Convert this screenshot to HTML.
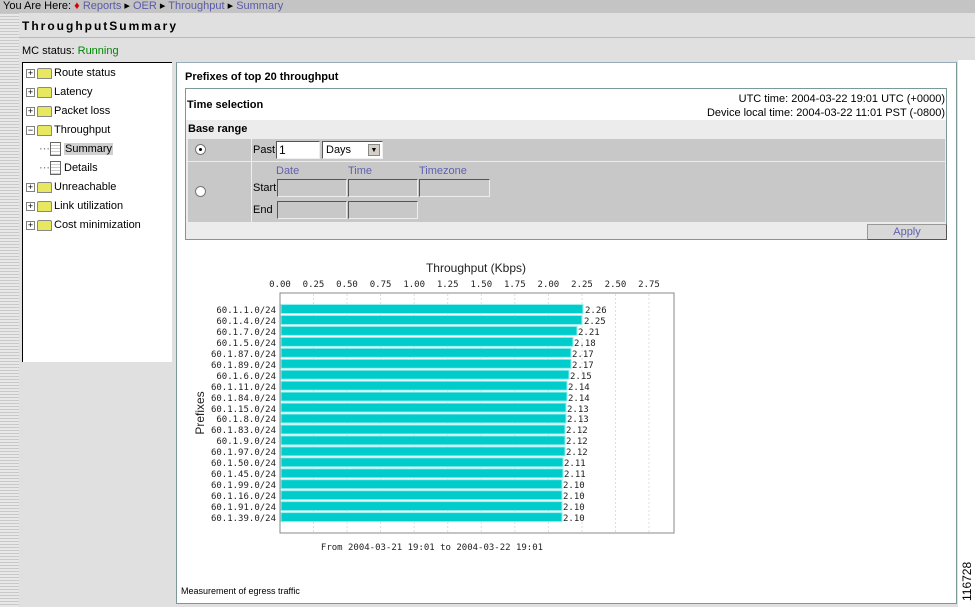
<!DOCTYPE html>
<html><head><meta charset="utf-8"><style>
*{margin:0;padding:0;box-sizing:border-box}
body{width:975px;height:607px;overflow:hidden;position:relative;background:#e0e0e0;font-family:"Liberation Sans",sans-serif;font-size:11px;color:#000}
.a{position:absolute;white-space:nowrap}
.stripe{left:0;top:13px;width:19px;height:594px;background:repeating-linear-gradient(#c8c8c8 0 1px,#e8e8e8 1px 3px)}
.crumb{left:0;top:0;width:975px;height:13px;background:#c4c4c4;font-size:11px;line-height:13px;padding-left:3px}
.crumb a{color:#5a5aa8;text-decoration:none}
.title{left:22px;top:19px;font-weight:bold;font-size:12px;letter-spacing:2px}
.tree{left:22px;top:62px;width:150px;height:300px;background:#fff;border-left:1px solid #000;border-top:1px solid #000}
.ti{position:absolute;left:3px;height:16px;line-height:16px;font-size:11px}
.pl{display:inline-block;width:9px;height:9px;border:1px solid #808080;font-size:9px;line-height:7px;text-align:center;vertical-align:middle;margin-right:2px;background:#fff}
.fd{display:inline-block;width:15px;height:11px;background:#e8e860;border:1px solid #888;vertical-align:middle;margin-right:2px;border-radius:2px 2px 0 0}
.doc{display:inline-block;width:11px;height:14px;border:1px solid #666;background:repeating-linear-gradient(#fff 0 2px,#ccc 2px 3px);vertical-align:middle;margin-right:3px}
.main{left:176px;top:62px;width:781px;height:542px;background:#fff;border:1px solid #7a9a98;border-top-color:#9ab}
.box{left:185px;top:88px;width:762px;height:152px;border:1px solid #7a9a98}
.in{background:#c8c8c8;border-top:1px solid #555;border-left:1px solid #555;border-bottom:1px solid #eee;border-right:1px solid #eee;position:absolute;height:18px}
.lbl{color:#6060b0}
</style></head><body>
<div class="a crumb">You Are Here: <span style="color:#d00">♦</span> <a>Reports</a> ▸ <a>OER</a> ▸ <a>Throughput</a> ▸ <a>Summary</a></div>
<div class="a stripe"></div>
<div class="a" style="left:19px;top:37px;width:956px;height:1px;background:#b8b8b8"></div>
<div class="a title">ThroughputSummary</div>
<div class="a" style="left:22px;top:45px">MC status: <span style="color:#080">Running</span></div>
<div class="a" style="left:958px;top:60px;width:17px;height:547px;background:#fff"></div>
<div class="a tree">
<div class="ti" style="top:2px"><span class="pl">+</span><span class="fd"></span>Route status</div>
<div class="ti" style="top:21px"><span class="pl">+</span><span class="fd"></span>Latency</div>
<div class="ti" style="top:40px"><span class="pl">+</span><span class="fd"></span>Packet loss</div>
<div class="ti" style="top:59px"><span class="pl">−</span><span class="fd"></span>Throughput</div>
<div class="ti" style="top:78px;left:16px"><span style="color:#888">⋯</span><span class="doc"></span><span style="background:#d0d0d0;padding:0 1px">Summary</span></div>
<div class="ti" style="top:97px;left:16px"><span style="color:#888">⋯</span><span class="doc"></span>Details</div>
<div class="ti" style="top:116px"><span class="pl">+</span><span class="fd"></span>Unreachable</div>
<div class="ti" style="top:135px"><span class="pl">+</span><span class="fd"></span>Link utilization</div>
<div class="ti" style="top:154px"><span class="pl">+</span><span class="fd"></span>Cost minimization</div>
</div>
<div class="a main"></div>
<div class="a" style="left:185px;top:71px;font-weight:bold">Prefixes of top 20 throughput</div>
<div class="a box"></div>
<div class="a" style="left:187px;top:99px;font-weight:bold">Time selection</div>
<div class="a" style="left:600px;top:92px;width:345px;text-align:right;line-height:14px;white-space:normal">UTC time: 2004-03-22 19:01 UTC (+0000)<br>Device local time: 2004-03-22 11:01 PST (-0800)</div>
<div class="a" style="left:186px;top:120px;width:760px;height:119px;background:#ececec"></div>
<div class="a" style="left:188px;top:123px;font-weight:bold">Base range</div>
<div class="a" style="left:188px;top:139px;width:757px;height:22px;background:#c8c8c8"></div>
<div class="a" style="left:188px;top:162px;width:757px;height:60px;background:#c8c8c8"></div>
<div class="a" style="left:251px;top:139px;width:1px;height:83px;background:#eee"></div>
<div class="a" style="left:195px;top:144px;width:11px;height:11px;border-radius:50%;background:#fff;border:1px solid #777"><div style="margin:3px;width:3px;height:3px;background:#000;border-radius:50%"></div></div>
<div class="a" style="left:195px;top:186px;width:11px;height:11px;border-radius:50%;background:#fff;border:1px solid #777"></div>
<div class="a" style="left:253px;top:144px">Past</div>
<div class="a in" style="left:276px;top:141px;width:44px;background:#fff;padding-left:2px;font-size:12px;line-height:16px">1</div>
<div class="a in" style="left:322px;top:141px;width:61px;background:#fff;padding-left:3px;line-height:16px">Days<span style="position:absolute;right:2px;top:2px;width:12px;height:12px;background:#d4d0c8;border:1px solid #888;font-size:7px;text-align:center;line-height:11px">▼</span></div>
<div class="a lbl" style="left:276px;top:165px">Date</div>
<div class="a lbl" style="left:348px;top:165px">Time</div>
<div class="a lbl" style="left:419px;top:165px">Timezone</div>
<div class="a" style="left:253px;top:182px">Start</div>
<div class="a in" style="left:277px;top:179px;width:70px"></div>
<div class="a in" style="left:348px;top:179px;width:70px"></div>
<div class="a in" style="left:419px;top:179px;width:71px"></div>
<div class="a" style="left:253px;top:204px">End</div>
<div class="a in" style="left:277px;top:201px;width:70px"></div>
<div class="a in" style="left:348px;top:201px;width:70px"></div>
<div class="a" style="left:867px;top:224px;width:80px;height:16px;background:#d8d8d8;border:1px solid #555;border-top-color:#999;border-left-color:#999;color:#6060b0;text-align:center;line-height:14px">Apply</div>
<svg class="a" style="left:0;top:0" width="975" height="607" font-family="DejaVu Sans Mono,monospace" font-size="9">
<text x="476" y="272" text-anchor="middle" font-family="Liberation Sans,sans-serif" font-size="12" fill="#222">Throughput (Kbps)</text>
<g fill="#222" text-anchor="middle" font-size="9">
<text x="280" y="287">0.00</text><text x="313.5" y="287">0.25</text><text x="347" y="287">0.50</text><text x="380.6" y="287">0.75</text><text x="414.2" y="287">1.00</text><text x="447.7" y="287">1.25</text><text x="481.3" y="287">1.50</text><text x="514.8" y="287">1.75</text><text x="548.4" y="287">2.00</text><text x="582" y="287">2.25</text><text x="615.5" y="287">2.50</text><text x="649" y="287">2.75</text>
</g>
<g stroke="#ddd" stroke-dasharray="2,2"><path d="M313.5 294V532M347 294V532M380.6 294V532M414.2 294V532M447.7 294V532M481.3 294V532M514.8 294V532M548.4 294V532M582 294V532M615.5 294V532M649 294V532"/></g>
<rect x="280" y="293" width="394" height="240" fill="none" stroke="#888"/>
<g fill="#00cccc" stroke="#9ee" stroke-width="1">
<rect x="281" y="304.5" width="302" height="9"/><rect x="281" y="315.5" width="301" height="9"/><rect x="281" y="326.4" width="296" height="9"/><rect x="281" y="337.4" width="292" height="9"/><rect x="281" y="348.3" width="290" height="9"/><rect x="281" y="359.3" width="290" height="9"/><rect x="281" y="370.2" width="288" height="9"/><rect x="281" y="381.2" width="286" height="9"/><rect x="281" y="392.1" width="286" height="9"/><rect x="281" y="403.1" width="285" height="9"/><rect x="281" y="414" width="285" height="9"/><rect x="281" y="425" width="284" height="9"/><rect x="281" y="435.9" width="284" height="9"/><rect x="281" y="446.9" width="284" height="9"/><rect x="281" y="457.8" width="282" height="9"/><rect x="281" y="468.8" width="282" height="9"/><rect x="281" y="479.7" width="281" height="9"/><rect x="281" y="490.7" width="281" height="9"/><rect x="281" y="501.6" width="281" height="9"/><rect x="281" y="512.6" width="281" height="9"/>
</g>
<g fill="#222" text-anchor="end">
<text x="276" y="313">60.1.1.0/24</text><text x="276" y="324">60.1.4.0/24</text><text x="276" y="335">60.1.7.0/24</text><text x="276" y="346">60.1.5.0/24</text><text x="276" y="357">60.1.87.0/24</text><text x="276" y="368">60.1.89.0/24</text><text x="276" y="379">60.1.6.0/24</text><text x="276" y="390">60.1.11.0/24</text><text x="276" y="401">60.1.84.0/24</text><text x="276" y="412">60.1.15.0/24</text><text x="276" y="422">60.1.8.0/24</text><text x="276" y="433">60.1.83.0/24</text><text x="276" y="444">60.1.9.0/24</text><text x="276" y="455">60.1.97.0/24</text><text x="276" y="466">60.1.50.0/24</text><text x="276" y="477">60.1.45.0/24</text><text x="276" y="488">60.1.99.0/24</text><text x="276" y="499">60.1.16.0/24</text><text x="276" y="510">60.1.91.0/24</text><text x="276" y="521">60.1.39.0/24</text>
</g>
<g fill="#222">
<text x="585" y="313">2.26</text><text x="584" y="324">2.25</text><text x="578" y="335">2.21</text><text x="574" y="346">2.18</text><text x="572" y="357">2.17</text><text x="572" y="368">2.17</text><text x="570" y="379">2.15</text><text x="568" y="390">2.14</text><text x="568" y="401">2.14</text><text x="567" y="412">2.13</text><text x="567" y="422">2.13</text><text x="566" y="433">2.12</text><text x="566" y="444">2.12</text><text x="566" y="455">2.12</text><text x="564" y="466">2.11</text><text x="564" y="477">2.11</text><text x="563" y="488">2.10</text><text x="563" y="499">2.10</text><text x="563" y="510">2.10</text><text x="563" y="521">2.10</text>
</g>
<text transform="translate(204,413) rotate(-90)" text-anchor="middle" font-family="Liberation Sans,sans-serif" font-size="12" fill="#222">Prefixes</text>
<text x="432" y="550" text-anchor="middle" fill="#222">From 2004-03-21 19:01 to 2004-03-22 19:01</text>
<text transform="translate(971,601) rotate(-90)" font-family="Liberation Sans,sans-serif" font-size="12" fill="#000">116728</text>
</svg>
<div class="a" style="left:181px;top:586px;font-size:9px">Measurement of egress traffic</div>
</body></html>
